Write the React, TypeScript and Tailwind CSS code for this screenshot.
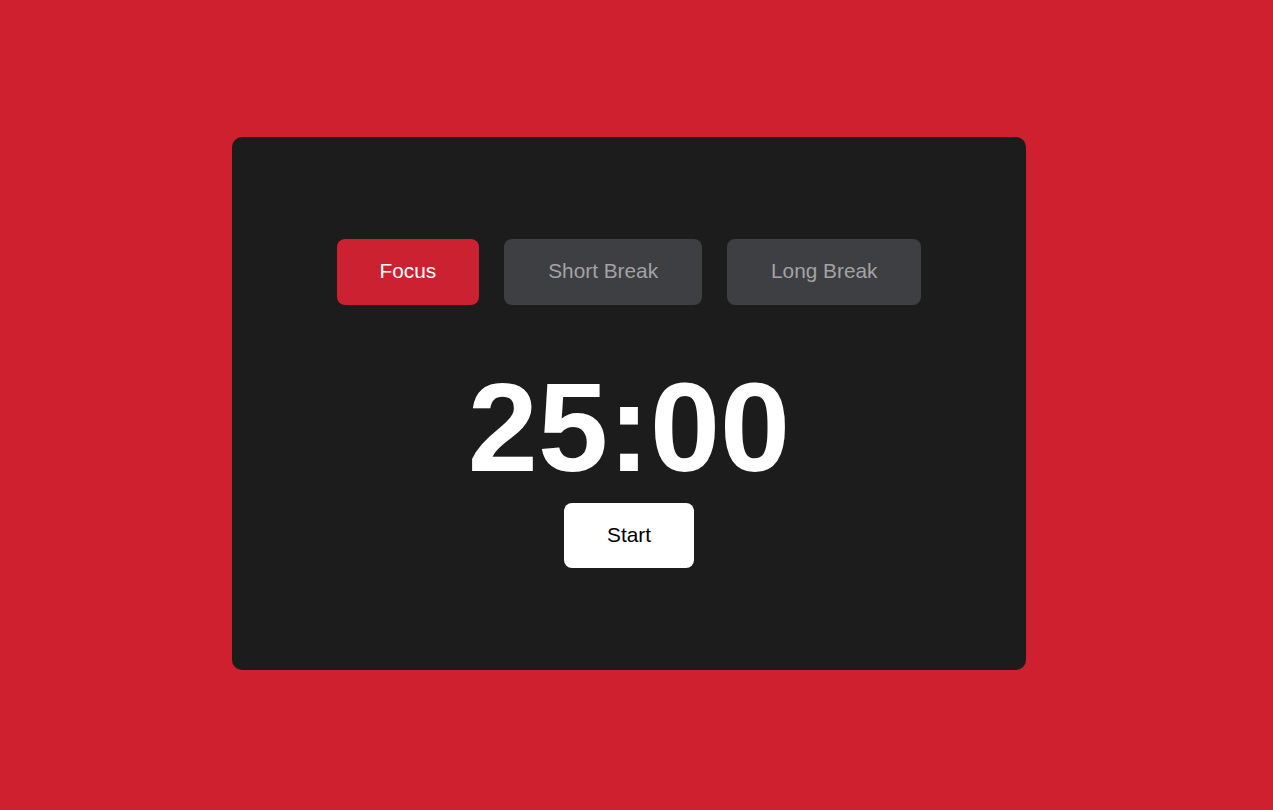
import { useState } from "react";

type Mode = "focus" | "short" | "long";

const MODES: { id: Mode; label: string; minutes: number }[] = [
    { id: "focus", label: "Focus", minutes: 25 },
    { id: "short", label: "Short Break", minutes: 5 },
    { id: "long", label: "Long Break", minutes: 15 },
];

export default function App() {
    const [mode, setMode] = useState<Mode>("focus");
    const current = MODES.find((m) => m.id === mode)!;
    const time = `${String(current.minutes).padStart(2, "0")}:00`;

    return (
        <div
            className="min-h-screen w-full bg-[#ce202e] flex items-center justify-center pr-[15px] pb-1"
            style={{ fontFamily: '"Liberation Sans", Arial, sans-serif' }}
        >
            <div className="w-[794px] bg-[#1c1c1c] rounded-[10px] py-[102px] flex flex-col items-center">
                <div className="flex gap-[25px]">
                    {MODES.map((m) => (
                        <button
                            key={m.id}
                            onClick={() => setMode(m.id)}
                            className={
                                m.id === mode
                                    ? "h-[66px] px-[43px] rounded-lg bg-[#cc2130] text-white text-[20.8px] leading-none"
                                    : "h-[66px] px-[44px] rounded-lg bg-[#3e3f43] text-[#a3a3a3] text-[20.8px] leading-none"
                            }
                        >
                            {m.label}
                        </button>
                    ))}
                </div>
                {/* timer readout */}
                <div className="mt-[49px] text-white font-bold text-[126px] leading-[147px]">{time}</div>
                <button className="mt-[2px] h-[65px] w-[130px] rounded-lg bg-white text-black text-[20.8px] leading-none">
                    Start
                </button>
            </div>
        </div>
    );
}
